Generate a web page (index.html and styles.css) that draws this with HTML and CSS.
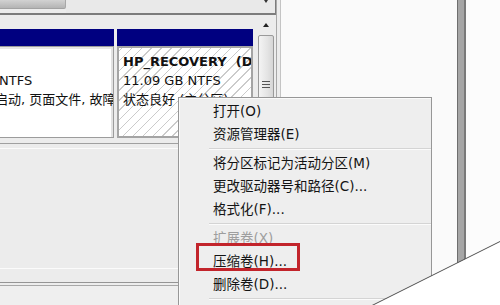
FILE: index.html
```html
<!DOCTYPE html>
<html lang="zh-CN">
<head>
<meta charset="utf-8">
<title>磁盘管理</title>
<link rel="stylesheet" href="styles.css">
</head>
<body>
<div class="screen">
  <div class="left">
    <div class="hscroll">
      <div class="hthumb"></div>
      <div class="htrack"><span class="harrow"></span></div>
    </div>
    <div class="content">
      <div class="disks">
        <div class="part p1">
          <div class="bar"></div>
          <div class="box">
            <div class="ln b">&nbsp;</div>
            <div class="ln l2">NTFS</div>
            <div class="ln l3">启动, 页面文件, 故障转储, 主分区)</div>
          </div>
        </div>
        <div class="part p2">
          <div class="bar"></div>
          <div class="box hatch">
            <div class="ln b">HP_RECOVERY&nbsp; (D:)</div>
            <div class="ln">11.09 GB NTFS</div>
            <div class="ln">状态良好 (主分区)</div>
          </div>
        </div>
      </div>
      <div class="vscroll">
        <div class="up"><span class="tri"></span></div>
        <div class="vthumb"><i></i><i></i><i></i></div>
      </div>
    </div>
    <div class="lower">
      <div class="pane">
        <div class="pane-in"></div>
      </div>
      <div class="status"></div>
    </div>
  </div>
  <div class="strip"></div>
  <div class="white"></div>
  <div class="vbar"></div>
  <div class="far"></div>

  <div class="menu">
    <div class="item">打开(O)</div>
    <div class="item">资源管理器(E)</div>
    <div class="sep"></div>
    <div class="item">将分区标记为活动分区(M)</div>
    <div class="item">更改驱动器号和路径(C)...</div>
    <div class="item">格式化(F)...</div>
    <div class="sep"></div>
    <div class="item disabled">扩展卷(X)</div>
    <div class="item">压缩卷(H)...</div>
    <div class="item">删除卷(D)...</div>
    <div class="sep"></div>
  </div>
  <div class="redbox"></div>
  <svg class="cut" width="500" height="305" viewBox="0 0 500 305">
    <polygon points="373,305.5 500,241.5 500,305.5" fill="#ffffff"/>
    <line x1="372" y1="305.5" x2="500" y2="241.5" stroke="#505050" stroke-width="1"/>
  </svg>
</div>
</body>
</html>
```

FILE: styles.css
```css
* { box-sizing: border-box; }
html, body { margin: 0; padding: 0; }
body {
  width: 500px;
  height: 305px;
  overflow: hidden;
  background: #fafafa;
  font-family: "DejaVu Sans", "Noto Sans CJK SC", sans-serif;
  color: #111;
}
.screen {
  position: relative;
  width: 500px;
  height: 305px;
  display: flex;
  overflow: hidden;
}
.left {
  width: 277px;
  height: 305px;
  background: #ececec;
  border-right: 1px solid #a8a8a8;
  display: flex;
  flex-direction: column;
  flex: none;
}
.hscroll {
  height: 15px;
  display: flex;
  border-bottom: 2px solid #7c7c7c;
  flex: none;
}
.hthumb {
  width: 66px;
  height: 9px;
  background: linear-gradient(#d2d2d2, #b4b4b4);
  border-bottom: 1px solid #a2a2a2;
  border-right: 1px solid #a8a8a8;
  border-radius: 0 0 2px 0;
}
.htrack {
  flex: 1;
  background: #e9e9e9;
  position: relative;
  border-right: 1px solid #7c7c7c;
}
.harrow {
  position: absolute;
  left: 198px;
  top: 0;
  width: 0;
  height: 0;
  border-left: 2px solid transparent;
  border-right: 2px solid transparent;
  border-top: 3px solid #333;
}
.content {
  display: flex;
  height: 123px;
  flex: none;
}
.disks {
  width: 253px;
  padding-top: 14px;
  display: flex;
  gap: 3px;
  overflow: hidden;
}
.part {
  display: flex;
  flex-direction: column;
}
.p1 { width: 114px; }
.p2 { width: 136px; }
.bar {
  height: 17px;
  background: #000080;
  flex: none;
}
.box {
  height: 92px;
  overflow: hidden;
  white-space: nowrap;
  font-size: 13px;
  line-height: 19px;
  padding-top: 5px;
}
.p1 .box {
  background: #ffffff;
  border: 1px solid #9c9c9c;
  border-left: none;
  box-shadow: inset -2px 0 0 #e2e2e2, inset 0 2px 0 #e6e6e6;
}
.p1 .l2 { margin-left: -1px; }
.p1 .l3 { margin-left: -5px; }
.hatch {
  border: 2px solid #a4a4a4;
  padding-left: 4px;
  padding-top: 4px;
  background-color: #ffffff;
  background-image: repeating-linear-gradient(-45deg, transparent 0, transparent 6px, #cbcbcb 6px, #cbcbcb 7px);
}
.b { font-weight: bold; }
.vscroll {
  width: 18px;
  margin-left: 4px;
  padding-top: 2px;
  display: flex;
  flex-direction: column;
}
.up {
  height: 18px;
  display: flex;
  justify-content: center;
  padding-top: 6px;
}
.tri {
  width: 0;
  height: 0;
  border-left: 3.5px solid transparent;
  border-right: 3.5px solid transparent;
  border-bottom: 4px solid #222;
}
.vthumb {
  flex: 1;
  margin: 0 1px;
  border: 1px solid #9a9a9a;
  border-radius: 2px;
  background: linear-gradient(90deg, #f4f4f4, #e4e4e4 60%, #d6d6d6);
  display: flex;
  flex-direction: column;
  align-items: center;
  padding-top: 45px;
  gap: 2px;
}
.vthumb i {
  display: block;
  width: 8px;
  height: 1px;
  background: #555;
}
.lower {
  flex: 1;
  padding-top: 5px;
  display: flex;
  flex-direction: column;
}
.pane {
  border-top: 1px solid #a0a0a0;
  padding-top: 4px;
  height: 139px;
  flex: none;
}
.pane-in {
  height: 121px;
  border-top: 1px solid #fbfbfb;
  border-bottom: 1px solid #fbfbfb;
}
.status {
  flex: 1;
  border-top: 1px solid #959595;
  box-shadow: inset 0 2px 0 #ededed, inset 0 3px 0 #a8a8a8;
  background: #efefef;
}
.strip {
  width: 4px;
  background: #ececec;
  border-right: 1px solid #c4c4c4;
  flex: none;
}
.white {
  width: 176px;
  background: #fafafa;
  flex: none;
}
.vbar {
  width: 9px;
  background: #a6a6a6;
  border-left: 1px solid #6e6e6e;
  border-right: 2px solid #7a7a7a;
  flex: none;
}
.far {
  flex: 1;
  background: #fcfcfc;
}
.menu {
  position: absolute;
  left: 178px;
  top: 97px;
  width: 254px;
  height: 230px;
  background: #eeeeee;
  border: 1px solid #979797;
  box-shadow: inset 1px 1px 0 #fafafa;
  padding-top: 2px;
  font-family: "DejaVu Sans", "Noto Sans CJK SC", sans-serif;
  font-size: 13.5px;
}
.item {
  height: 23px;
  line-height: 23px;
  padding-left: 34px;
  white-space: nowrap;
  color: #141414;
}
.item.disabled { color: #9e9e9e; }
.sep {
  height: 2px;
  margin: 2px 0 2px 30px;
  border-top: 1px solid #d4d4d4;
  border-bottom: 1px solid #fbfbfb;
}
.redbox {
  position: absolute;
  left: 196px;
  top: 243px;
  width: 104px;
  height: 28px;
  border: 3px solid #c2242b;
}
.cut {
  position: absolute;
  left: 0;
  top: 0;
}
```
